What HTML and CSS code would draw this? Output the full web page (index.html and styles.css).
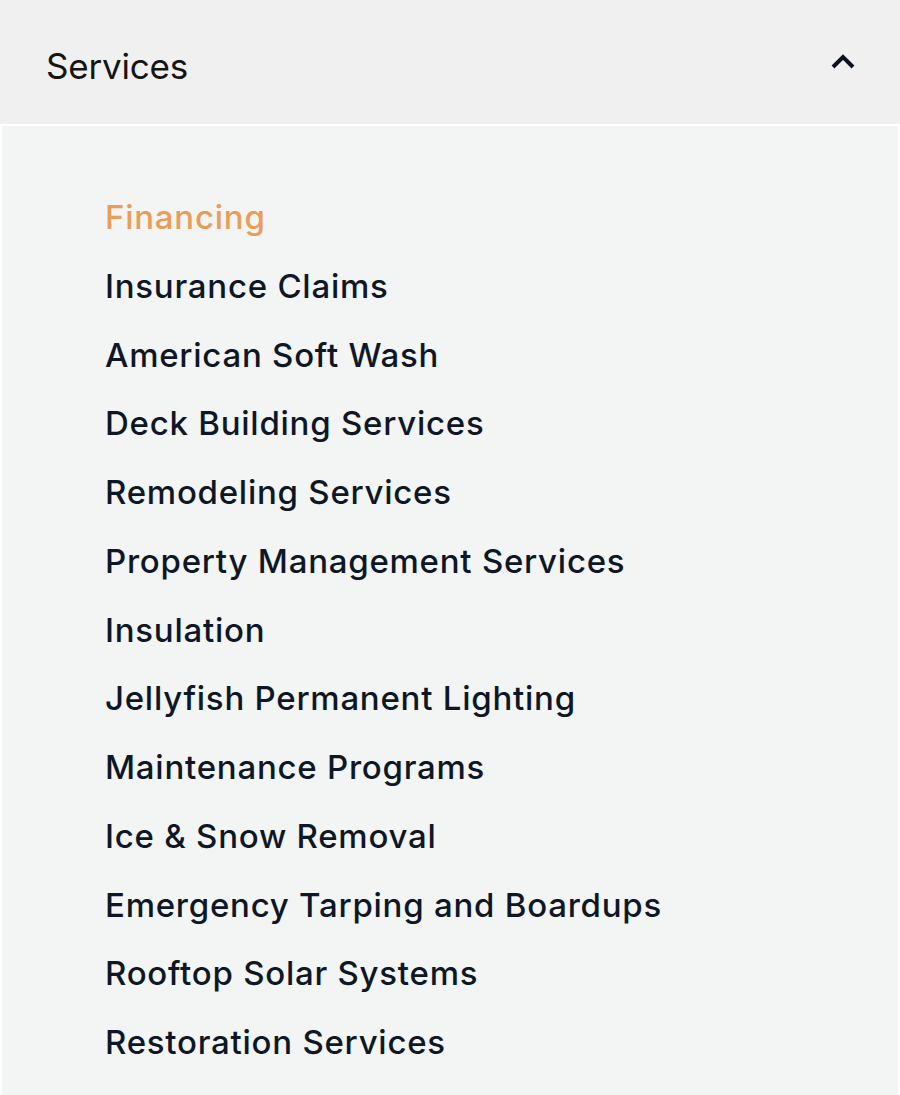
FILE: index.html
```html
<!DOCTYPE html>
<html>
<head>
<meta charset="utf-8">
<link rel="stylesheet" href="styles.css">
</head>
<body>
<div class="accordion">
  <div class="acc-header">
    <span class="acc-title">Services</span>
    <svg class="chev" width="26" height="18" viewBox="0 0 26 18"><path d="M3 15 L13 5 L23 15" fill="none" stroke="#0b1220" stroke-width="4"/></svg>
  </div>
  <div class="acc-panel">
    <ul class="menu">
      <li class="active">Financing</li>
      <li>Insurance Claims</li>
      <li>American Soft Wash</li>
      <li>Deck Building Services</li>
      <li>Remodeling Services</li>
      <li>Property Management Services</li>
      <li>Insulation</li>
      <li>Jellyfish Permanent Lighting</li>
      <li>Maintenance Programs</li>
      <li>Ice &amp; Snow Removal</li>
      <li>Emergency Tarping and Boardups</li>
      <li>Rooftop Solar Systems</li>
      <li>Restoration Services</li>
    </ul>
  </div>
</div>
</body>
</html>
```
FILE: styles.css
```css
html, body { margin: 0; padding: 0; background: #ffffff; }
body { width: 900px; height: 1095px; overflow: hidden; font-family: Inter, "Noto Sans", sans-serif; }
.accordion { display: flex; flex-direction: column; }
.acc-header {
  height: 124px;
  background: #f0f0f0;
  display: flex;
  align-items: center;
  justify-content: space-between;
  padding: 0 44px 0 46px;
  box-sizing: border-box;
}
.acc-title { font-size: 35px; font-weight: 400; color: #151515; letter-spacing: -0.2px; margin-top: 8px; }
.chev { display: block; margin-top: -2px; }
.acc-panel {
  margin: 2px 2px 0 2px;
  background: #f3f4f4;
  height: 969px;
  box-sizing: border-box;
  padding: 57px 0 0 103px;
}
.menu { list-style: none; margin: 0; padding: 0; }
.menu li { font-size: 33px; font-weight: 500; line-height: 68.75px; color: #0e1726; letter-spacing: 0.75px; }
.menu li.active { color: #e99d58; }
```
